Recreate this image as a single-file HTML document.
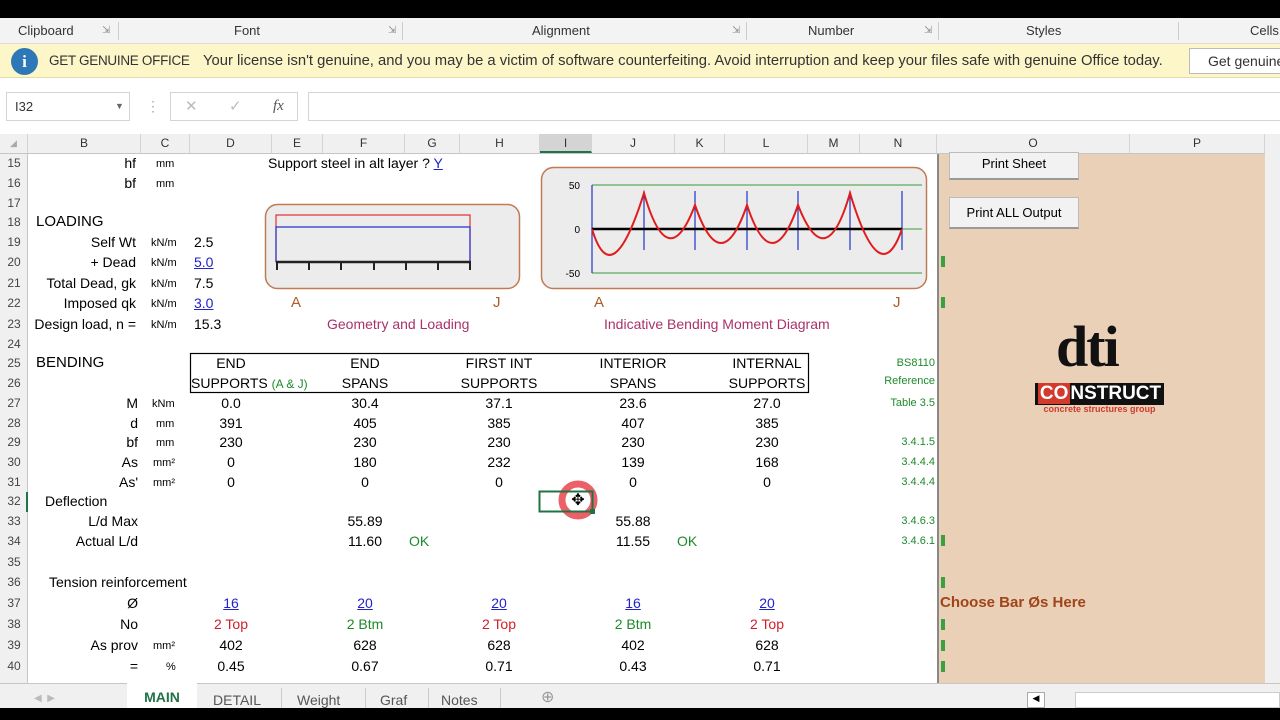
<!DOCTYPE html>
<html><head><meta charset="utf-8"><style>
*{margin:0;padding:0;box-sizing:border-box}
body{width:1280px;height:720px;overflow:hidden;background:#fff;font-family:"Liberation Sans",Arial,sans-serif;position:relative;font-size:14px;color:#000}
div{position:absolute;white-space:nowrap}
.t{line-height:18px;height:18px}
.c{transform:translateX(-50%)}
.r{transform:translateX(-100%)}
.s{font-size:11px}
.g{color:#1e8a2a}
.b{color:#2222cc;text-decoration:underline}
.red{color:#d0202a}
.rn{left:0;width:28px;text-align:center;font-size:12px;color:#444;line-height:18px}
.ch{top:134px;height:19px;line-height:19px;font-size:12px;color:#333;text-align:center;border-right:1px solid #d4d4d4}
.ref{font-size:11px;color:#1e8a2a;transform:translateX(-100%)}
</style></head><body>
<div style="left:0;top:0;width:1280px;height:18px;background:#000"></div>
<div style="left:0;top:18px;width:1280px;height:26px;background:#f3f3f3;border-bottom:1px solid #ddd"></div>
<div class="t" style="left:18px;top:22px;font-size:13px;color:#333">Clipboard</div>
<div class="t" style="left:102px;top:22px;font-size:10px;color:#888">⇲</div>
<div style="left:118px;top:22px;width:1px;height:18px;background:#ccc"></div>
<div class="t" style="left:234px;top:22px;font-size:13px;color:#333">Font</div>
<div class="t" style="left:388px;top:22px;font-size:10px;color:#888">⇲</div>
<div style="left:402px;top:22px;width:1px;height:18px;background:#ccc"></div>
<div class="t" style="left:532px;top:22px;font-size:13px;color:#333">Alignment</div>
<div class="t" style="left:732px;top:22px;font-size:10px;color:#888">⇲</div>
<div style="left:746px;top:22px;width:1px;height:18px;background:#ccc"></div>
<div class="t" style="left:808px;top:22px;font-size:13px;color:#333">Number</div>
<div class="t" style="left:924px;top:22px;font-size:10px;color:#888">⇲</div>
<div style="left:938px;top:22px;width:1px;height:18px;background:#ccc"></div>
<div class="t" style="left:1026px;top:22px;font-size:13px;color:#333">Styles</div>
<div style="left:1178px;top:22px;width:1px;height:18px;background:#ccc"></div>
<div class="t" style="left:1250px;top:22px;font-size:13px;color:#333">Cells</div>
<div style="left:0;top:44px;width:1280px;height:34px;background:#fdf6c9;border-bottom:1px solid #e3dca8"></div>
<div style="left:11px;top:48px;width:27px;height:27px;border-radius:50%;background:#2e78b8;color:#fff;text-align:center;font:bold 17px/27px 'Liberation Serif',serif">i</div>
<div class="t" style="left:49px;top:52px;font-size:13.5px;color:#333;letter-spacing:-0.3px">GET GENUINE OFFICE</div>
<div class="t" style="left:203px;top:52px;font-size:14.8px;color:#333">Your license isn't genuine, and you may be a victim of software counterfeiting. Avoid interruption and keep your files safe with genuine Office today.</div>
<div style="left:1189px;top:48px;width:100px;height:26px;border:1px solid #bbb;background:#fff;font-size:14px;line-height:24px;padding-left:18px;color:#333">Get genuine</div>
<div style="left:0;top:79px;width:1280px;height:55px;background:#fff"></div>
<div style="left:6px;top:92px;width:124px;height:29px;border:1px solid #d4d4d4;font-size:13px;line-height:27px;padding-left:8px;color:#333">I32<span style="position:absolute;left:108px;font-size:9px;color:#666">▼</span></div>
<div class="t" style="left:146px;top:97px;color:#aaa">⋮</div>
<div style="left:170px;top:92px;width:128px;height:29px;border:1px solid #d4d4d4;font-size:15px;line-height:27px;color:#bbb"><span style="position:absolute;left:14px">✕</span><span style="position:absolute;left:58px">✓</span><span style="position:absolute;left:102px;color:#555;font-family:'Liberation Serif',serif;font-style:italic">fx</span></div>
<div style="left:308px;top:92px;width:980px;height:29px;border:1px solid #d4d4d4"></div>
<div style="left:0;top:134px;width:1280px;height:20px;background:#f0f0f0;border-bottom:1px solid #c6c6c6"></div>
<div class="ch" style="left:0;width:28px;font-size:9px;color:#aaa">◢</div>
<div class="ch" style="left:28px;width:113px">B</div>
<div class="ch" style="left:141px;width:49px">C</div>
<div class="ch" style="left:190px;width:82px">D</div>
<div class="ch" style="left:272px;width:51px">E</div>
<div class="ch" style="left:323px;width:82px">F</div>
<div class="ch" style="left:405px;width:55px">G</div>
<div class="ch" style="left:460px;width:80px">H</div>
<div class="ch" style="left:540px;width:52px;background:#d4d4d4;border-bottom:2px solid #217346">I</div>
<div class="ch" style="left:592px;width:83px">J</div>
<div class="ch" style="left:675px;width:50px">K</div>
<div class="ch" style="left:725px;width:83px">L</div>
<div class="ch" style="left:808px;width:52px">M</div>
<div class="ch" style="left:860px;width:77px">N</div>
<div class="ch" style="left:937px;width:193px">O</div>
<div class="ch" style="left:1130px;width:135px">P</div>
<div style="left:0;top:154px;width:28px;height:530px;background:#f0f0f0;border-right:1px solid #c6c6c6"></div>
<div style="left:26px;top:492px;width:2px;height:20px;background:#217346"></div>
<div class="rn" style="top:154px">15</div><div class="rn" style="top:174px">16</div><div class="rn" style="top:194px">17</div><div class="rn" style="top:213px">18</div><div class="rn" style="top:233px">19</div><div class="rn" style="top:253px">20</div><div class="rn" style="top:274px">21</div><div class="rn" style="top:294px">22</div><div class="rn" style="top:315px">23</div><div class="rn" style="top:335px">24</div><div class="rn" style="top:354px">25</div><div class="rn" style="top:374px">26</div><div class="rn" style="top:394px">27</div><div class="rn" style="top:414px">28</div><div class="rn" style="top:433px">29</div><div class="rn" style="top:453px">30</div><div class="rn" style="top:473px">31</div><div class="rn" style="top:492px">32</div><div class="rn" style="top:512px">33</div><div class="rn" style="top:532px">34</div><div class="rn" style="top:553px">35</div><div class="rn" style="top:573px">36</div><div class="rn" style="top:594px">37</div><div class="rn" style="top:615px">38</div><div class="rn" style="top:636px">39</div><div class="rn" style="top:657px">40</div>
<div style="left:937px;top:154px;width:328px;height:530px;background:#e9d0b6;border-left:2px solid #888"></div>
<div style="left:1265px;top:134px;width:15px;height:550px;background:#f0f0f0"></div>
<div style="left:949px;top:152px;width:130px;height:28px;background:#f2f2f2;border:1px solid #bbb;border-bottom:2px solid #999;text-align:center;font-size:13px;line-height:22px">Print Sheet</div>
<div style="left:949px;top:197px;width:130px;height:32px;background:#f2f2f2;border:1px solid #bbb;border-bottom:2px solid #999;text-align:center;font-size:13px;line-height:30px">Print ALL Output</div>
<div style="left:941px;top:256px;width:4px;height:11px;background:#3aa040"></div>
<div style="left:941px;top:297px;width:4px;height:11px;background:#3aa040"></div>
<div style="left:941px;top:535px;width:4px;height:11px;background:#3aa040"></div>
<div style="left:941px;top:577px;width:4px;height:11px;background:#3aa040"></div>
<div style="left:941px;top:619px;width:4px;height:11px;background:#3aa040"></div>
<div style="left:941px;top:640px;width:4px;height:11px;background:#3aa040"></div>
<div style="left:941px;top:661px;width:4px;height:11px;background:#3aa040"></div>
<div style="left:1056px;top:318px;font:bold 58px/58px 'Liberation Serif',serif;color:#111;letter-spacing:-2px">dti</div>
<div style="left:1035px;top:383px;width:129px;height:22px;background:#111;color:#fff;font:bold 19px/22px 'Liberation Sans',sans-serif;text-align:center"><span style="background:#d23a2c;padding:0 2px">CO</span>NSTRUCT</div>
<div style="left:1035px;top:404px;width:129px;font-size:9px;color:#d23a2c;text-align:center;font-weight:bold">concrete structures group</div>
<div class="t" style="left:940px;top:594px;font-size:15px;font-weight:bold;color:#a0441a">Choose Bar Øs Here</div>
<div class="t r" style="left:136px;top:154px">hf</div><div class="t s" style="left:156px;top:155px">mm</div>
<div class="t r" style="left:136px;top:174px">bf</div><div class="t s" style="left:156px;top:175px">mm</div>
<div class="t" style="left:268px;top:154px">Support steel in alt layer ? <span class="b">Y</span></div>
<div class="t" style="left:36px;top:213px;font-size:15px">LOADING</div>
<div class="t r" style="left:136px;top:233px">Self Wt</div><div class="t s" style="left:151px;top:234px">kN/m</div><div class="t" style="left:194px;top:233px">2.5</div>
<div class="t r" style="left:136px;top:253px">+ Dead</div><div class="t s" style="left:151px;top:254px">kN/m</div><div class="t b" style="left:194px;top:253px">5.0</div>
<div class="t r" style="left:136px;top:274px">Total Dead, gk</div><div class="t s" style="left:151px;top:275px">kN/m</div><div class="t" style="left:194px;top:274px">7.5</div>
<div class="t r" style="left:136px;top:294px">Imposed qk</div><div class="t s" style="left:151px;top:295px">kN/m</div><div class="t" style="left:194px;top:294px"><span class="b">3.0</span></div>
<div class="t" style="left:28px;top:315px;width:108px;overflow:hidden"><span style="position:absolute;right:0;top:0">Design load, n =</span></div><div class="t s" style="left:151px;top:316px">kN/m</div><div class="t" style="left:194px;top:315px">15.3</div>
<svg style="position:absolute;left:0;top:0" width="1280" height="720">
<rect x="265.5" y="204.5" width="254" height="84" rx="12" fill="#ececec" stroke="#c07a55" stroke-width="1.5"/>
<rect x="276" y="215" width="194" height="47" fill="none" stroke="#e03030" stroke-width="1.2"/>
<polyline points="276,262 276,227 470,227 470,262" fill="none" stroke="#2233cc" stroke-width="1.2"/>
<line x1="276" y1="262" x2="471" y2="262" stroke="#222" stroke-width="2.5"/>
<g stroke="#222" stroke-width="2"><line x1="277" y1="262" x2="277" y2="270"/><line x1="309" y1="262" x2="309" y2="270"/><line x1="341" y1="262" x2="341" y2="270"/><line x1="374" y1="262" x2="374" y2="270"/><line x1="406" y1="262" x2="406" y2="270"/><line x1="438" y1="262" x2="438" y2="270"/><line x1="470" y1="262" x2="470" y2="270"/></g>
<rect x="541.5" y="167.5" width="385" height="121" rx="12" fill="#ececec" stroke="#c07a55" stroke-width="1.5"/>
<line x1="592" y1="185" x2="922" y2="185" stroke="#3a9a3a"/>
<line x1="592" y1="273" x2="922" y2="273" stroke="#3a9a3a"/>
<line x1="592" y1="229" x2="922" y2="229" stroke="#3a9a3a"/>
<g stroke="#2233cc" stroke-width="1.2"><line x1="592" y1="185" x2="592" y2="273"/><line x1="644" y1="191" x2="644" y2="250"/><line x1="695" y1="191" x2="695" y2="250"/><line x1="747" y1="191" x2="747" y2="250"/><line x1="798" y1="191" x2="798" y2="250"/><line x1="850" y1="191" x2="850" y2="250"/><line x1="902" y1="191" x2="902" y2="250"/></g>
<line x1="592" y1="229" x2="902" y2="229" stroke="#000" stroke-width="2.5"/>
<path d="M592,229 Q612,295 644,193 Q668,277 695,205 Q721,281 747,205 Q772,281 798,205 Q826,277 850,193 Q880,293 902,229" fill="none" stroke="#e01c1c" stroke-width="2"/>
<text x="580" y="189" font-size="10" text-anchor="end" font-family="Liberation Sans">50</text>
<text x="580" y="233" font-size="10" text-anchor="end" font-family="Liberation Sans">0</text>
<text x="580" y="277" font-size="10" text-anchor="end" font-family="Liberation Sans">-50</text>
<rect x="190.5" y="353.5" width="618" height="39" fill="none" stroke="#000" stroke-width="1.2"/>
<circle cx="578" cy="500" r="16" fill="none" stroke="#e8454c" stroke-width="7" opacity="0.85"/>
<rect x="539.5" y="491.5" width="53" height="20" fill="none" stroke="#217346" stroke-width="2"/>
<rect x="590" y="509" width="5" height="5" fill="#217346"/>
</svg>
<div class="t" style="left:291px;top:294px;color:#b05a2a;font-size:15px">A</div>
<div class="t" style="left:493px;top:294px;color:#b05a2a;font-size:15px">J</div>
<div class="t" style="left:327px;top:315px;color:#a8326a">Geometry and Loading</div>
<div class="t" style="left:594px;top:294px;color:#b05a2a;font-size:15px">A</div>
<div class="t" style="left:893px;top:294px;color:#b05a2a;font-size:15px">J</div>
<div class="t" style="left:604px;top:315px;color:#a8326a">Indicative Bending Moment Diagram</div>
<div class="t" style="left:578px;top:492px;font-size:16px;transform:translateX(-50%)">✥</div>
<div class="t" style="left:36px;top:354px;font-size:15px">BENDING</div>
<div class="t c" style="left:231px;top:354px">END</div><div class="t c" style="left:365px;top:354px">END</div><div class="t c" style="left:499px;top:354px">FIRST INT</div><div class="t c" style="left:633px;top:354px">INTERIOR</div><div class="t c" style="left:767px;top:354px">INTERNAL</div>
<div class="t" style="left:191px;top:374px">SUPPORTS <span class="g" style="font-size:12px">(A &amp; J)</span></div><div class="t c" style="left:365px;top:374px">SPANS</div><div class="t c" style="left:499px;top:374px">SUPPORTS</div><div class="t c" style="left:633px;top:374px">SPANS</div><div class="t c" style="left:767px;top:374px">SUPPORTS</div>
<div class="t ref" style="left:935px;top:354px">BS8110</div><div class="t ref" style="left:935px;top:372px">Reference</div><div class="t ref" style="left:935px;top:394px">Table 3.5</div>
<div class="t ref" style="left:935px;top:433px">3.4.1.5</div><div class="t ref" style="left:935px;top:453px">3.4.4.4</div><div class="t ref" style="left:935px;top:473px">3.4.4.4</div><div class="t ref" style="left:935px;top:512px">3.4.6.3</div><div class="t ref" style="left:935px;top:532px">3.4.6.1</div>
<div class="t r" style="left:138px;top:394px">M</div><div class="t s" style="left:152px;top:395px">kNm</div>
<div class="t c" style="left:231px;top:394px">0.0</div><div class="t c" style="left:365px;top:394px">30.4</div><div class="t c" style="left:499px;top:394px">37.1</div><div class="t c" style="left:633px;top:394px">23.6</div><div class="t c" style="left:767px;top:394px">27.0</div>
<div class="t r" style="left:138px;top:414px">d</div><div class="t s" style="left:156px;top:415px">mm</div>
<div class="t c" style="left:231px;top:414px">391</div><div class="t c" style="left:365px;top:414px">405</div><div class="t c" style="left:499px;top:414px">385</div><div class="t c" style="left:633px;top:414px">407</div><div class="t c" style="left:767px;top:414px">385</div>
<div class="t r" style="left:138px;top:433px">bf</div><div class="t s" style="left:156px;top:434px">mm</div>
<div class="t c" style="left:231px;top:433px">230</div><div class="t c" style="left:365px;top:433px">230</div><div class="t c" style="left:499px;top:433px">230</div><div class="t c" style="left:633px;top:433px">230</div><div class="t c" style="left:767px;top:433px">230</div>
<div class="t r" style="left:138px;top:453px">As</div><div class="t s" style="left:153px;top:454px">mm²</div>
<div class="t c" style="left:231px;top:453px">0</div><div class="t c" style="left:365px;top:453px">180</div><div class="t c" style="left:499px;top:453px">232</div><div class="t c" style="left:633px;top:453px">139</div><div class="t c" style="left:767px;top:453px">168</div>
<div class="t r" style="left:138px;top:473px">As'</div><div class="t s" style="left:153px;top:474px">mm²</div>
<div class="t c" style="left:231px;top:473px">0</div><div class="t c" style="left:365px;top:473px">0</div><div class="t c" style="left:499px;top:473px">0</div><div class="t c" style="left:633px;top:473px">0</div><div class="t c" style="left:767px;top:473px">0</div>
<div class="t" style="left:45px;top:492px">Deflection</div>
<div class="t r" style="left:138px;top:512px">L/d Max</div><div class="t c" style="left:365px;top:512px">55.89</div><div class="t c" style="left:633px;top:512px">55.88</div>
<div class="t r" style="left:138px;top:532px">Actual L/d</div><div class="t c" style="left:365px;top:532px">11.60</div><div class="t g" style="left:409px;top:532px">OK</div><div class="t c" style="left:633px;top:532px">11.55</div><div class="t g" style="left:677px;top:532px">OK</div>
<div class="t" style="left:49px;top:573px">Tension reinforcement</div>
<div class="t r" style="left:138px;top:594px">Ø</div>
<div class="t c b" style="left:231px;top:594px">16</div><div class="t c b" style="left:365px;top:594px">20</div><div class="t c b" style="left:499px;top:594px">20</div><div class="t c b" style="left:633px;top:594px">16</div><div class="t c b" style="left:767px;top:594px">20</div>
<div class="t r" style="left:138px;top:615px">No</div>
<div class="t c red" style="left:231px;top:615px">2 Top</div><div class="t c g" style="left:365px;top:615px">2 Btm</div><div class="t c red" style="left:499px;top:615px">2 Top</div><div class="t c g" style="left:633px;top:615px">2 Btm</div><div class="t c red" style="left:767px;top:615px">2 Top</div>
<div class="t r" style="left:138px;top:636px">As prov</div><div class="t s" style="left:153px;top:637px">mm²</div>
<div class="t c" style="left:231px;top:636px">402</div><div class="t c" style="left:365px;top:636px">628</div><div class="t c" style="left:499px;top:636px">628</div><div class="t c" style="left:633px;top:636px">402</div><div class="t c" style="left:767px;top:636px">628</div>
<div class="t r" style="left:138px;top:657px">=</div><div class="t s" style="left:166px;top:658px">%</div>
<div class="t c" style="left:231px;top:657px">0.45</div><div class="t c" style="left:365px;top:657px">0.67</div><div class="t c" style="left:499px;top:657px">0.71</div><div class="t c" style="left:633px;top:657px">0.43</div><div class="t c" style="left:767px;top:657px">0.71</div>
<div style="left:0;top:683px;width:1280px;height:25px;background:#f0f0f0;border-top:1px solid #c6c6c6"></div>
<div class="t" style="left:34px;top:690px;font-size:10px;color:#bbb">◀ &nbsp;▶</div>
<div style="left:127px;top:683px;width:70px;height:25px;background:#fff;color:#217346;font-weight:bold;text-align:center;line-height:28px;font-size:14px">MAIN</div>
<div class="t" style="left:213px;top:691px;color:#555">DETAIL</div>
<div style="left:281px;top:688px;width:1px;height:20px;background:#ccc"></div>
<div class="t" style="left:297px;top:691px;color:#555">Weight</div>
<div style="left:365px;top:688px;width:1px;height:20px;background:#ccc"></div>
<div class="t" style="left:380px;top:691px;color:#555">Graf</div>
<div style="left:428px;top:688px;width:1px;height:20px;background:#ccc"></div>
<div class="t" style="left:441px;top:691px;color:#555">Notes</div>
<div style="left:500px;top:688px;width:1px;height:20px;background:#ccc"></div>
<div class="t" style="left:541px;top:689px;color:#999;font-size:16px">⊕</div>
<div style="left:1027px;top:692px;width:18px;height:16px;border:1px solid #aaa;background:#fff;font-size:9px;text-align:center">◀</div>
<div style="left:1075px;top:692px;width:205px;height:16px;border:1px solid #ccc;background:#fff"></div>
<div style="left:0;top:708px;width:1280px;height:12px;background:#000"></div>
</body></html>
